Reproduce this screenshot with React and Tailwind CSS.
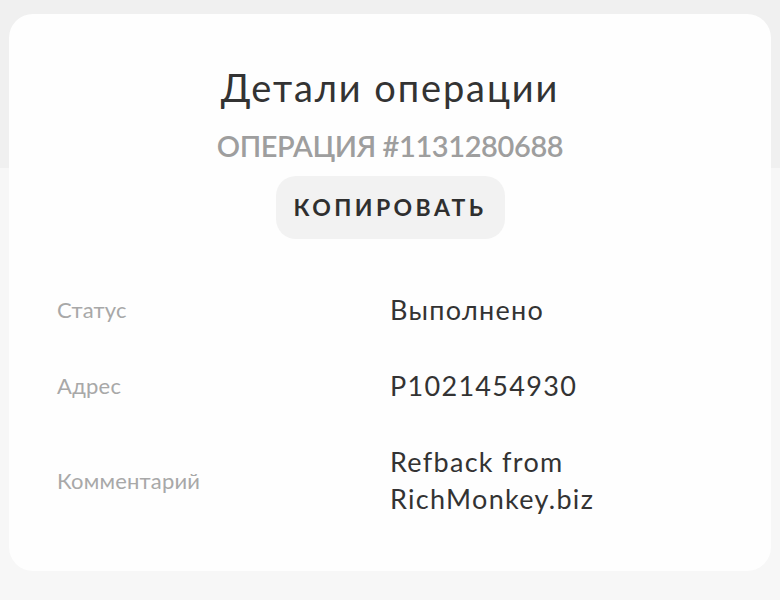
const ROWS = [
  { label: 'Статус', value: ['Выполнено'] },
  { label: 'Адрес', value: ['P1021454930'] },
  { label: 'Комментарий', value: ['Refback from', 'RichMonkey.biz'] },
];

export default function App() {
  return (
    <div
      className="w-[780px] h-[600px] overflow-hidden bg-[linear-gradient(to_bottom,#f0f0f0_168px,#f7f7f7_168px)] pt-[14px] px-[9px]"
      style={{ fontFamily: 'Lato, "Open Sans", sans-serif' }}
    >
      <div className="h-[557px] rounded-[24px] bg-[#fefefe] flex flex-col items-center pt-[52px]">
        {/* Header */}
        <h1 className="text-[38px] leading-[42px] text-[#333333] font-normal tracking-[1.9px]">Детали операции</h1>
        <p className="mt-[22px] text-[29px] leading-[32px] font-semibold text-[#9e9e9e] tracking-[-0.4px]">
          ОПЕРАЦИЯ #1131280688
        </p>
        <button className="mt-[14px] w-[229px] h-[63px] rounded-[20px] bg-[#f2f2f2] text-[23px] font-bold tracking-[3.4px] text-[#2f2f2f]">
          КОПИРОВАТЬ
        </button>

        {/* Details */}
        <div className="self-stretch mt-[52px] pl-[48px] flex flex-col gap-[39px]">
          {ROWS.map(({ label, value }) => (
            <div key={label} className="grid grid-cols-[333px_1fr] items-center">
              <span className="text-[22px] tracking-[0.2px] text-[#a8a8a8]">{label}</span>
              <div className="text-[27px] leading-[37px] tracking-[1.3px] text-[#333333]">
                {value.map((line) => (
                  <div key={line}>{line}</div>
                ))}
              </div>
            </div>
          ))}
        </div>
      </div>
    </div>
  );
}
